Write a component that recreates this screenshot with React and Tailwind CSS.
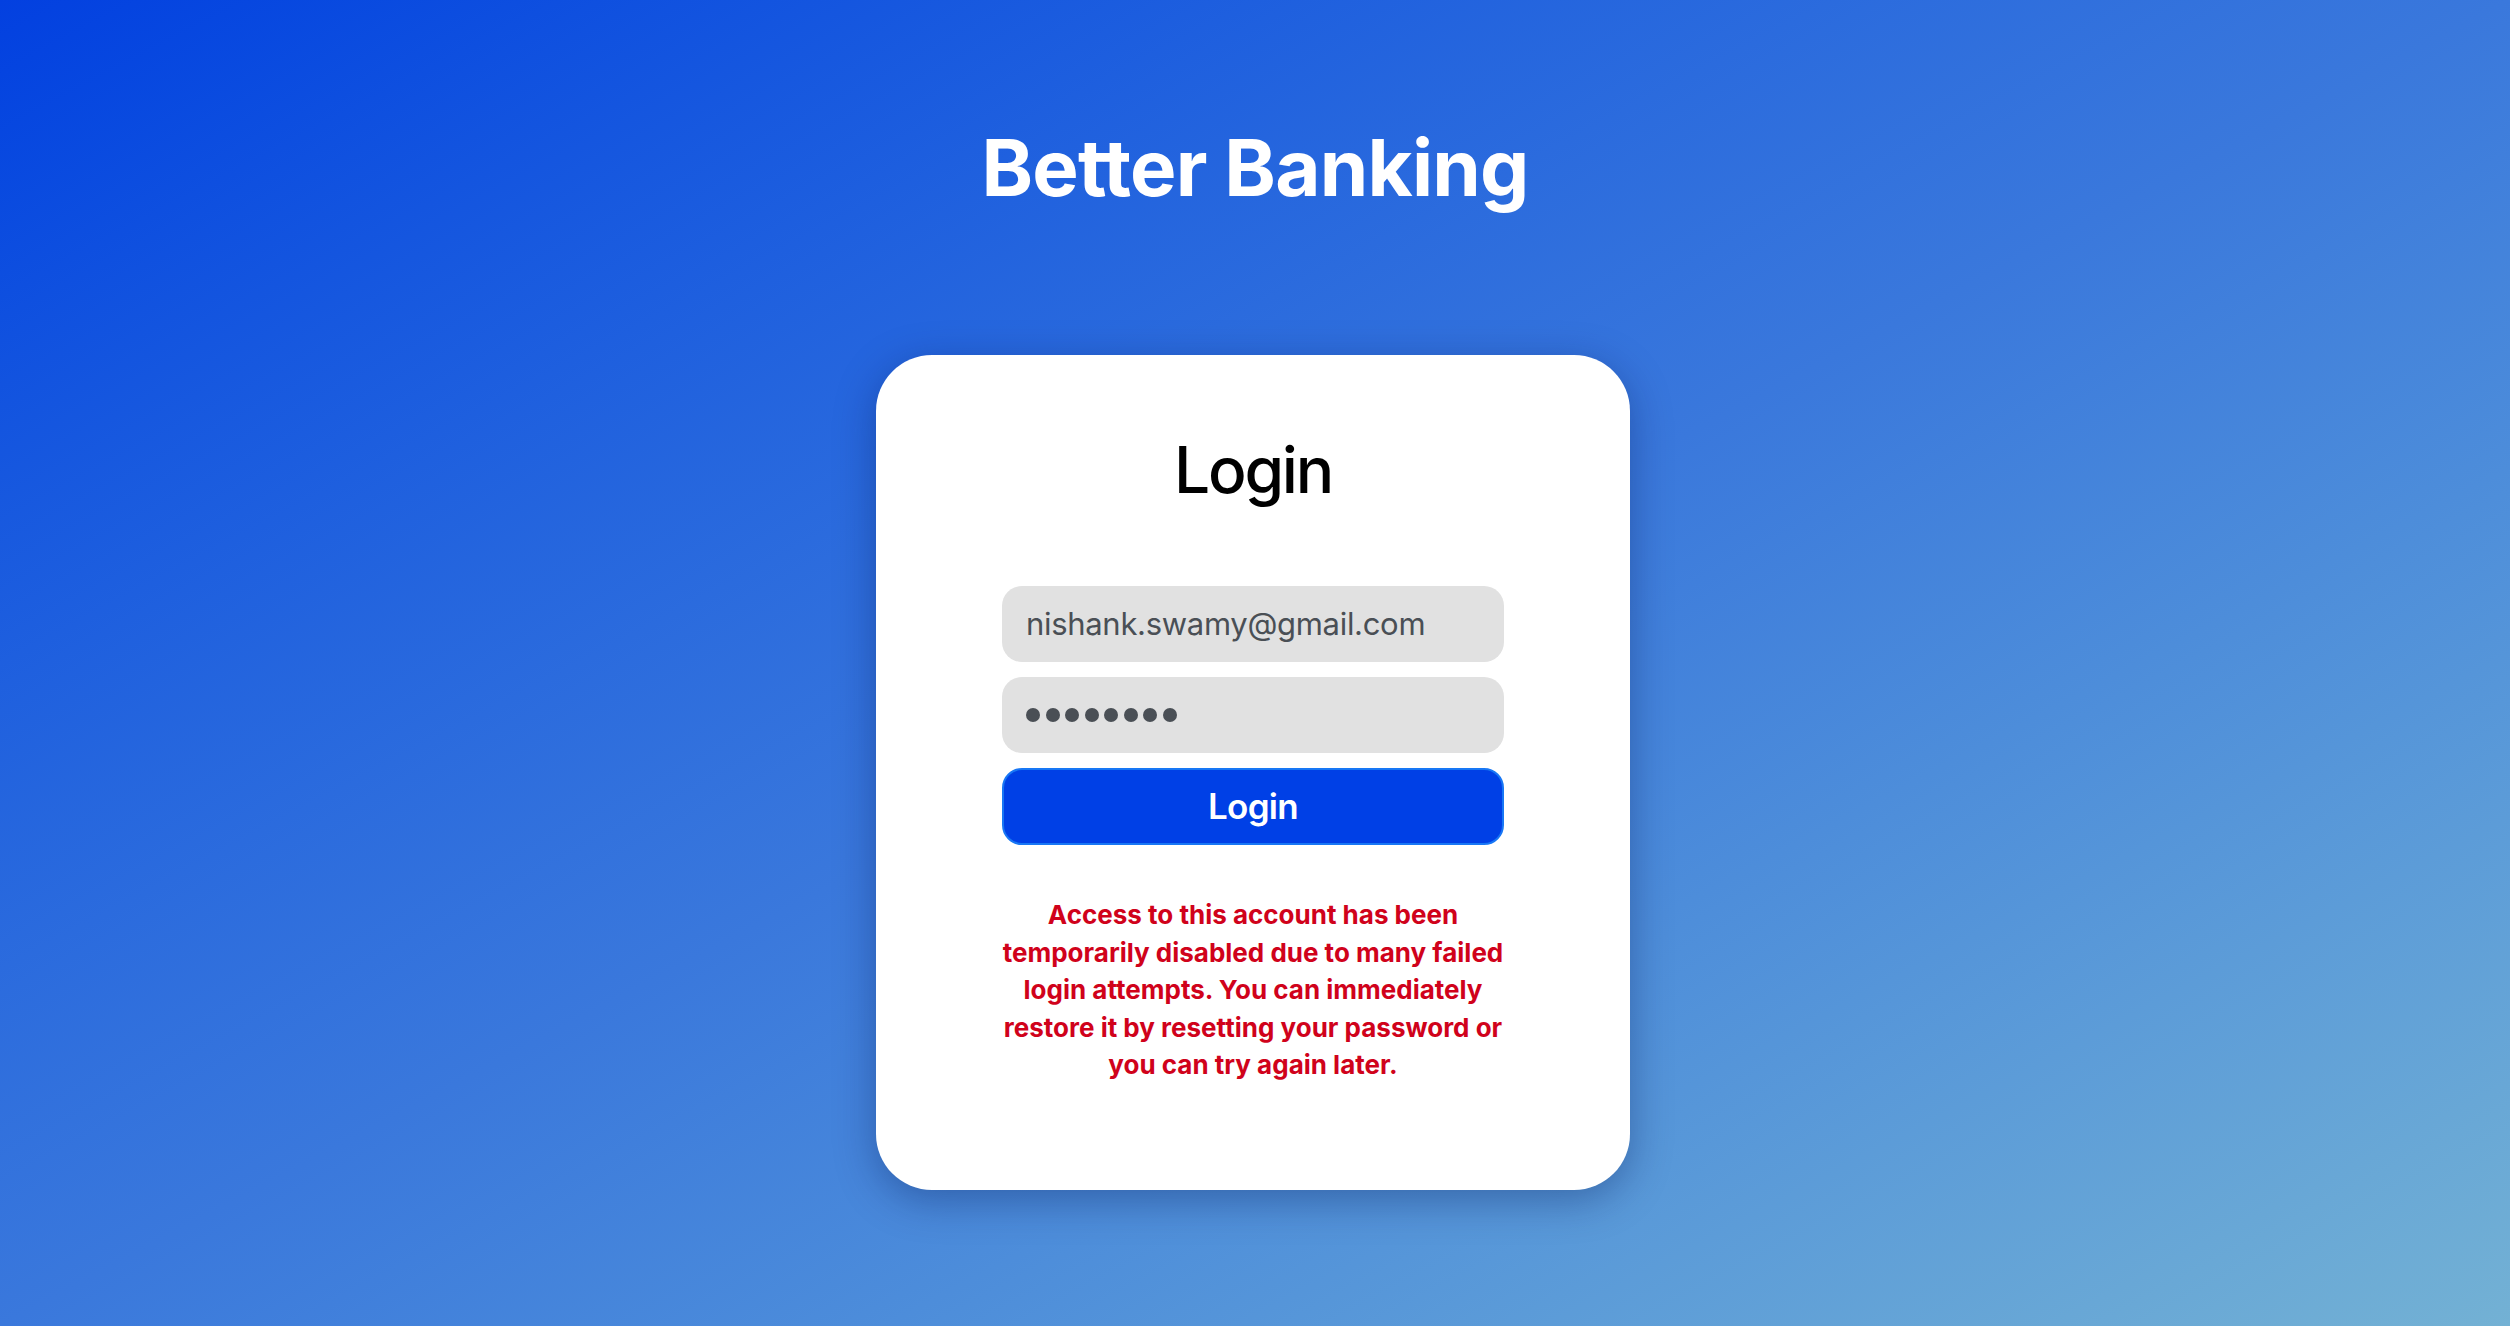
import React from 'react';

const font = { fontFamily: 'Inter, "Noto Sans", sans-serif' };

const LoginCard = () => {
  return (
    <div className="w-[754px] -translate-x-[2px] rounded-[56px] bg-white px-[126px] pt-[83px] pb-[106px] shadow-[0_10px_40px_rgba(0,20,80,0.35)]">
      <h2 className="text-center text-[64px] leading-none font-medium tracking-[-0.035em] text-black">Login</h2>

      <div className="mt-[84px] flex flex-col gap-[15px]">
        <div className="flex h-[76px] items-center rounded-[20px] bg-[#e1e1e1] px-6 text-[31px] tracking-[-0.01em] text-[#4a4f55]">
          nishank.swamy@gmail.com
        </div>
        <div className="flex h-[76px] items-center gap-[5.5px] rounded-[20px] bg-[#e1e1e1] px-6">
          {Array.from({ length: 8 }).map((_, i) => (
            <span key={i} className="h-[14px] w-[14px] rounded-full bg-[#4a4f55]" />
          ))}
        </div>
        <button className="h-[77px] rounded-[20px] border-2 border-[#1877f5] bg-[#0040e6] text-[35px] font-semibold tracking-[-0.02em] text-white">
          Login
        </button>
      </div>

      <p className="mt-[51px] -mx-2 text-center text-[26px] leading-[37.6px] font-bold text-[#d0021b]">
        Access to this account has been<br />
        temporarily disabled due to many failed<br />
        login attempts. You can immediately<br />
        restore it by resetting your password or<br />
        you can try again later.
      </p>
    </div>
  );
};

export default function App() {
  return (
    <div
      className="flex min-h-[1326px] w-full flex-col items-center bg-gradient-to-br from-[#0340e0] via-[#3a78dc] to-[#73b1d4]"
      style={font}
    >
      <h1 className="mt-[129px] text-[78px] leading-none font-bold tracking-[-0.01em] text-white">Better Banking</h1>
      <div className="mt-[148px]">
        <LoginCard />
      </div>
    </div>
  );
}
